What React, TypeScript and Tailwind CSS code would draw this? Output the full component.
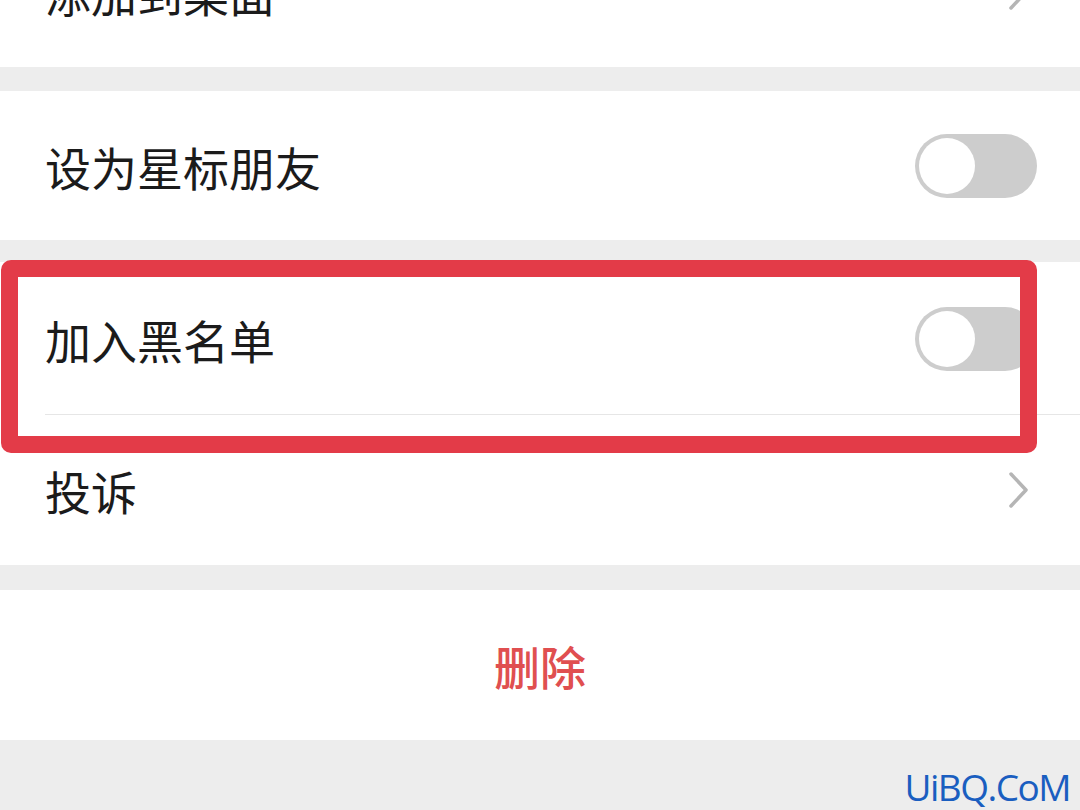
const FONT = { fontFamily: '"Noto Sans CJK SC", "Noto Sans", sans-serif' };

const Toggle = () => (
  <div className="w-[122px] h-[64px] rounded-full bg-[#cdcdcd] p-[4px] flex items-center">
    <div className="w-[56px] h-[56px] rounded-full bg-white" />
  </div>
);

const Chevron = () => (
  <svg width="22" height="38" viewBox="0 0 22 38" fill="none">
    <path d="M3 3 L18 19 L3 35" stroke="#b5b5b5" strokeWidth="3.5" strokeLinecap="round" strokeLinejoin="round" />
  </svg>
);

const Row = ({
  label,
  right,
  h = "h-[150px]",
  divider = false,
}: {
  label: string;
  right?: React.ReactNode;
  h?: string;
  divider?: boolean;
}) => (
  <div className={`bg-white ${h} flex items-center pl-[45px] relative`}>
    <span className="text-[46px] text-[#1b1b1b] leading-none flex-1">{label}</span>
    <div className="pr-[43px] flex items-center">{right}</div>
    {divider && <div className="absolute left-[45px] right-0 bottom-0 h-px bg-[#e6e6e6]" />}
  </div>
);

const Gap = ({ h }: { h: string }) => <div className={`${h} bg-[#ededed]`} />;

export default function App() {
  return (
    <div className="w-[1080px] h-[810px] overflow-hidden bg-[#ededed] relative" style={FONT}>
      <div className="-mt-[83px]">
        <div className="bg-white h-[150px] flex items-center pl-[45px]">
          <span className="text-[46px] text-[#1b1b1b] leading-none flex-1">添加到桌面</span>
          <div className="pr-[50px] flex items-center">
            <Chevron />
          </div>
        </div>
        <Gap h="h-[24px]" />
        <Row label="设为星标朋友" h="h-[149px]" right={<Toggle />} />
        <Gap h="h-[22px]" />
        <Row label="加入黑名单" h="h-[153px]" right={<Toggle />} divider />
        <Row label="投诉" right={<div className="pr-[7px]"><Chevron /></div>} />
        <Gap h="h-[25px]" />
        <div className="bg-white h-[150px] flex items-center justify-center">
          <span className="text-[46px] text-[#e04f50] leading-none font-medium">删除</span>
        </div>
        <div className="h-[70px] flex items-center justify-end pr-[10px] pt-[22px]">
          <span
            className="text-[37px] text-[#1a5ec0] leading-none tracking-[-1.5px]"
            style={{ fontFamily: '"Open Sans", sans-serif' }}
          >
            UiBQ.CoM
          </span>
        </div>
      </div>

      {/* red highlight box */}
      <div className="absolute left-[1px] top-[260px] w-[1036px] h-[193px] border-[17px] border-[#e33b48] rounded-[10px]" />
    </div>
  );
}
